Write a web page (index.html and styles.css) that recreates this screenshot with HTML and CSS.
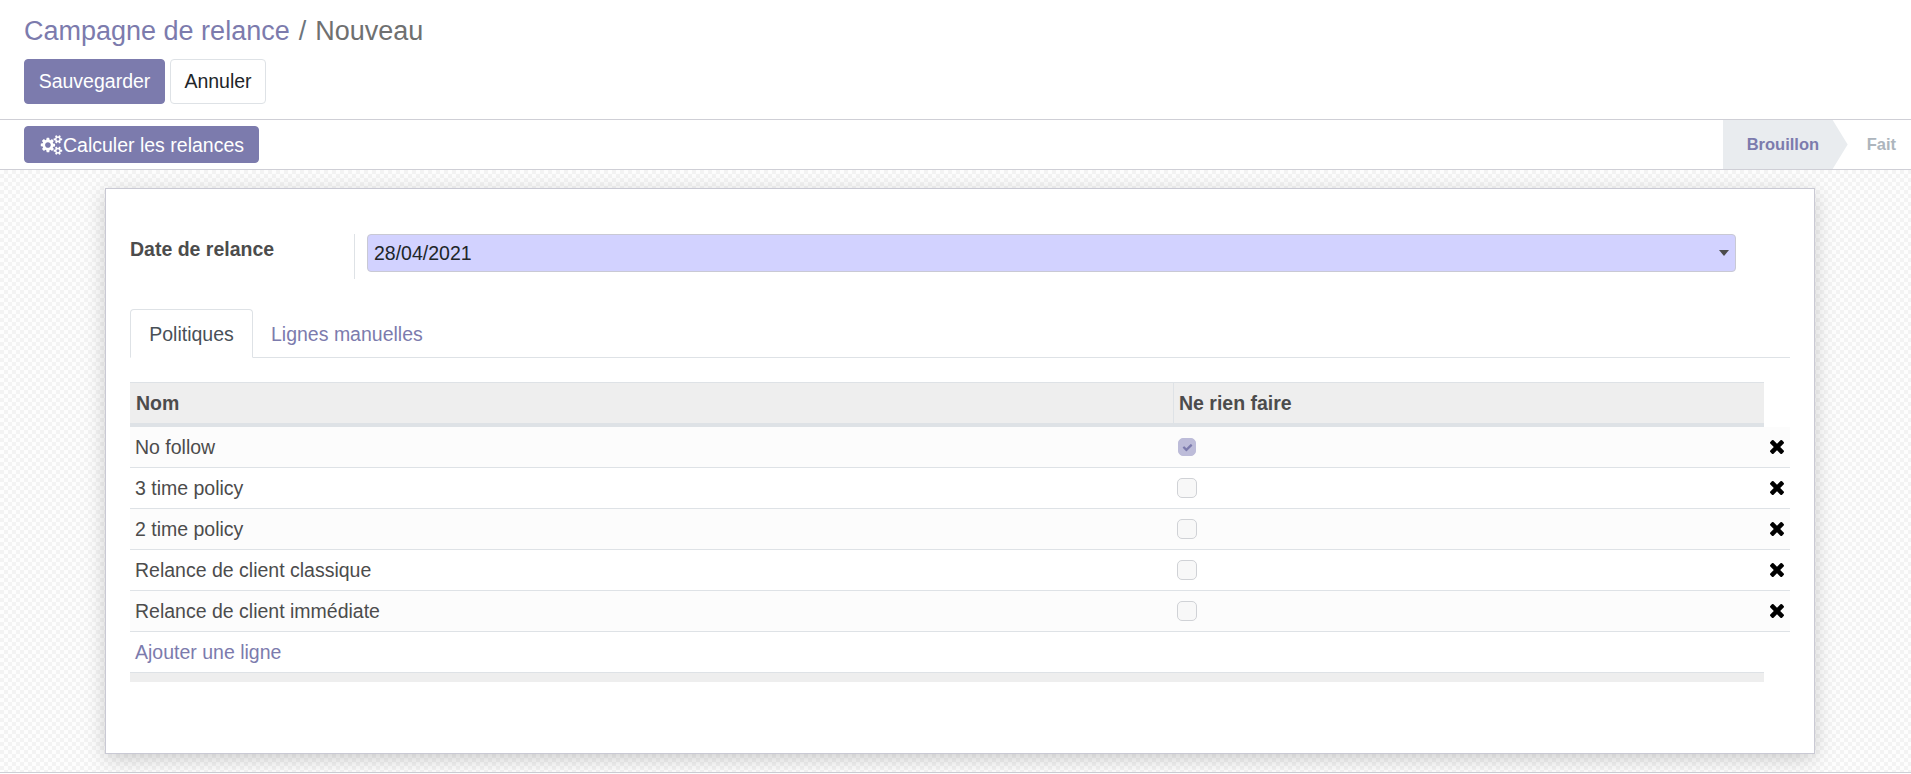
FILE: index.html
```html
<!DOCTYPE html>
<html lang="fr">
<head>
<meta charset="utf-8">
<title>Campagne de relance</title>
<link rel="stylesheet" href="styles.css">
</head>
<body>
<header class="control-panel">
  <h1 class="breadcrumb"><a class="crumb-link">Campagne de relance</a><span class="crumb-sep">/</span><span class="crumb-current">Nouveau</span></h1>
  <div class="actions">
    <button class="btn btn-primary btn-save">Sauvegarder</button>
    <button class="btn btn-secondary">Annuler</button>
  </div>
</header>
<div class="statusbar">
  <button class="btn btn-primary btn-compute">
    <svg class="icon-cogs" viewBox="0 0 2048 1792" aria-hidden="true"><path d="M960 896q0-106-75-181t-181-75-181 75-75 181 75 181 181 75 181-75 75-181zm768 512q0-52-38-90t-90-38-90 38-38 90q0 53 37.5 90.5t90.5 37.5 90.5-37.5 37.5-90.5zm0-1024q0-52-38-90t-90-38-90 38-38 90q0 53 37.5 90.5t90.5 37.5 90.5-37.5 37.5-90.5zm-384 421v185q0 10-7 19.5t-16 10.5l-155 24q-11 35-32 76 34 48 90 115 7 11 7 20 0 12-7 19-23 30-82.5 89.5t-78.5 59.5q-11 0-21-7l-115-90q-37 19-77 31-11 108-23 155-7 24-30 24h-186q-11 0-20-7.5t-10-17.5l-23-153q-34-10-75-31l-118 89q-7 7-20 7-11 0-21-8-144-133-144-160 0-9 7-19 10-14 41-53t47-61q-23-44-35-82l-152-24q-10-1-17-9.5t-7-19.5v-185q0-10 7-19.5t16-10.5l155-24q11-35 32-76-34-48-90-115-7-11-7-20 0-12 7-20 22-30 82-89t79-59q11 0 21 7l115 90q34-18 77-32 11-108 23-154 7-24 30-24h186q11 0 20 7.5t10 17.5l23 153q34 10 75 31l118-89q8-7 20-7 11 0 21 8 144 133 144 160 0 8-7 19-12 16-42 54t-45 60q23 48 34 82l152 23q10 2 17 10.5t7 19.5zm640 533v140q0 16-149 31-12 27-30 52 51 113 51 138 0 4-4 7-122 71-124 71-8 0-46-47t-52-68q-20 2-30 2t-30-2q-14 21-52 68t-46 47q-2 0-124-71-4-3-4-7 0-25 51-138-18-25-30-52-149-15-149-31v-140q0-16 149-31 13-29 30-52-51-113-51-138 0-4 4-7 4-2 35-20t59-34 30-16q8 0 46 46.5t52 67.5q20-2 30-2t30 2q51-71 92-112l6-2q4 0 124 70 4 3 4 7 0 25-51 138 17 23 30 52 149 15 149 31zm0-1024v140q0 16-149 31-12 27-30 52 51 113 51 138 0 4-4 7-122 71-124 71-8 0-46-47t-52-68q-20 2-30 2t-30-2q-14 21-52 68t-46 47q-2 0-124-71-4-3-4-7 0-25 51-138-18-25-30-52-149-15-149-31v-140q0-16 149-31 13-29 30-52-51-113-51-138 0-4 4-7 4-2 35-20t59-34 30-16q8 0 46 46.5t52 67.5q20-2 30-2t30 2q51-71 92-112l6-2q4 0 124 70 4 3 4 7 0 25-51 138 17 23 30 52 149 15 149 31z"/></svg>
    <span class="btn-label">Calculer les relances</span>
  </button>
  <div class="status-steps">
    <div class="step step-active">Brouillon</div>
    <div class="step">Fait</div>
  </div>
</div>
<main class="sheet-bg">
  <section class="sheet">
    <div class="field-row">
      <label class="field-label">Date de relance</label>
      <div class="field-cell">
        <div class="select-input"><span class="select-value">28/04/2021</span><i class="caret"></i></div>
      </div>
    </div>
    <nav class="tabs">
      <a class="tab tab-active">Politiques</a>
      <a class="tab">Lignes manuelles</a>
    </nav>
    <table class="grid">
      <colgroup><col class="col-name"><col class="col-flag"><col class="col-del"></colgroup>
      <thead>
        <tr><th class="th-name">Nom</th><th class="th-flag">Ne rien faire</th><th class="th-empty"></th></tr>
      </thead>
      <tbody>
        <tr class="odd"><td class="td-name">No follow</td><td class="td-flag"><span class="check check-on"><svg viewBox="0 0 1792 1792" aria-hidden="true"><path d="M1671 566q0 40-28 68l-724 724-136 136q-28 28-68 28t-68-28l-136-136-362-362q-28-28-28-68t28-68l136-136q28-28 68-28t68 28l294 295 656-657q28-28 68-28t68 28l136 136q28 28 28 68z"/></svg></span></td><td class="td-del"><svg class="icon-x" viewBox="110 -18 1188 1188" aria-hidden="true"><path d="M1298 214q0-40-28-68l-136-136q-28-28-68-28t-68 28l-294 294-294-294q-28-28-68-28t-68 28l-136 136q-28 28-28 68t28 68l294 294-294 294q-28 28-28 68t28 68l136 136q28 28 68 28t68-28l294-294 294 294q28 28 68 28t68-28l136-136q28-28 28-68t-28-68l-294-294 294-294q28-28 28-68z"/></svg></td></tr>
        <tr><td class="td-name">3 time policy</td><td class="td-flag"><span class="check"></span></td><td class="td-del"><svg class="icon-x" viewBox="110 -18 1188 1188" aria-hidden="true"><path d="M1298 214q0-40-28-68l-136-136q-28-28-68-28t-68 28l-294 294-294-294q-28-28-68-28t-68 28l-136 136q-28 28-28 68t28 68l294 294-294 294q-28 28-28 68t28 68l136 136q28 28 68 28t68-28l294-294 294 294q28 28 68 28t68-28l136-136q28-28 28-68t-28-68l-294-294 294-294q28-28 28-68z"/></svg></td></tr>
        <tr class="odd"><td class="td-name">2 time policy</td><td class="td-flag"><span class="check"></span></td><td class="td-del"><svg class="icon-x" viewBox="110 -18 1188 1188" aria-hidden="true"><path d="M1298 214q0-40-28-68l-136-136q-28-28-68-28t-68 28l-294 294-294-294q-28-28-68-28t-68 28l-136 136q-28 28-28 68t28 68l294 294-294 294q-28 28-28 68t28 68l136 136q28 28 68 28t68-28l294-294 294 294q28 28 68 28t68-28l136-136q28-28 28-68t-28-68l-294-294 294-294q28-28 28-68z"/></svg></td></tr>
        <tr><td class="td-name">Relance de client classique</td><td class="td-flag"><span class="check"></span></td><td class="td-del"><svg class="icon-x" viewBox="110 -18 1188 1188" aria-hidden="true"><path d="M1298 214q0-40-28-68l-136-136q-28-28-68-28t-68 28l-294 294-294-294q-28-28-68-28t-68 28l-136 136q-28 28-28 68t28 68l294 294-294 294q-28 28-28 68t28 68l136 136q28 28 68 28t68-28l294-294 294 294q28 28 68 28t68-28l136-136q28-28 28-68t-28-68l-294-294 294-294q28-28 28-68z"/></svg></td></tr>
        <tr class="odd"><td class="td-name">Relance de client immédiate</td><td class="td-flag"><span class="check"></span></td><td class="td-del"><svg class="icon-x" viewBox="110 -18 1188 1188" aria-hidden="true"><path d="M1298 214q0-40-28-68l-136-136q-28-28-68-28t-68 28l-294 294-294-294q-28-28-68-28t-68 28l-136 136q-28 28-28 68t28 68l294 294-294 294q-28 28-28 68t28 68l136 136q28 28 68 28t68-28l294-294 294 294q28 28 68 28t68-28l136-136q28-28 28-68t-28-68l-294-294 294-294q28-28 28-68z"/></svg></td></tr>
        <tr class="add-row"><td colspan="3"><a class="add-link">Ajouter une ligne</a></td></tr>
      </tbody>
      <tfoot>
        <tr><td class="foot-cell" colspan="2"></td><td class="foot-empty"></td></tr>
      </tfoot>
    </table>
  </section>
</main>
</body>
</html>
```
FILE: styles.css
```css
* { box-sizing: border-box; }
html, body { margin: 0; padding: 0; height: 100%; }
body {
  background: #fff;
  color: #4c4c4c;
  font-family: "Liberation Sans", Arial, sans-serif;
  font-size: 19.5px;
  line-height: 1.5;
  overflow: hidden;
}
a { color: #7c7bad; text-decoration: none; }

.control-panel {
  height: 120px;
  padding: 13px 24px 0;
  border-bottom: 1px solid #cfcfd6;
}
.breadcrumb {
  margin: 0;
  height: 37px;
  font-size: 27px;
  font-weight: 400;
  line-height: 37px;
  color: #6c757d;
}
.crumb-sep { margin: 0 9px; }
.crumb-current { color: #6f7070; }

.actions { display: flex; gap: 5px; margin-top: 9px; }
.btn {
  font: inherit;
  border-radius: 4px;
  cursor: pointer;
}
.btn-primary {
  background: #7c7bad;
  border: 1px solid #7c7bad;
  color: #fff;
}
.btn-secondary {
  background: #fff;
  border: 1px solid #dee2e6;
  color: #212529;
  width: 96px;
  height: 45px;
  padding: 0;
}
.btn-save { width: 141px; height: 45px; padding: 0; }

.statusbar {
  height: 50px;
  padding-left: 24px;
  border-bottom: 1px solid #cfcfd6;
  display: flex;
  justify-content: space-between;
  align-items: center;
}
.btn-compute {
  width: 235px;
  height: 37px;
  padding: 0 0 0 15px;
  display: flex;
  align-items: center;
  line-height: 1;
}
.btn-label { position: relative; top: 1px; }
.icon-cogs { width: 23px; height: 20px; fill: #fff; flex: none; }

.status-steps { display: flex; align-self: stretch; }
.step {
  display: flex;
  align-items: center;
  font-size: 16.5px;
  font-weight: 700;
  color: #adb5bd;
  padding: 0 15px 0 19px;
}
.step-active {
  width: 125px;
  padding: 0 0 0 24px;
  background: #e9ecef;
  color: #7c7bad;
  clip-path: polygon(0 0, 110px 0, 125px 50%, 110px 100%, 0 100%);
}

.sheet-bg {
  height: 603px;
  padding: 18px 0 0 105px;
  border-bottom: 1px solid #cfcfd6;
  background-color: #fdfdfd;
  background-image: conic-gradient(#f3f3f3 25%, #fdfdfd 0 50%, #f3f3f3 0 75%, #fdfdfd 0);
  background-size: 8px 8px;
}
.sheet {
  width: 1710px;
  height: 566px;
  padding: 45px 24px 0;
  background: #fff;
  border: 1px solid #c9c9d4;
  box-shadow: 0 5px 20px -1px rgba(0, 0, 0, 0.2);
}

.field-row { display: flex; }
.field-label {
  width: 224px;
  font-weight: 700;
  line-height: 30px;
  color: #4c4c4c;
}
.field-cell {
  width: 1382px;
  height: 45px;
  padding-left: 12px;
  border-left: 1px solid #dee2e6;
}
.select-input {
  height: 38px;
  padding: 0 6px;
  display: flex;
  align-items: center;
  justify-content: space-between;
  background: #d2d2ff;
  border: 1px solid #c9c9d4;
  border-radius: 4px;
  color: #212529;
}
.select-value { position: relative; top: 1px; }
.caret {
  width: 0;
  height: 0;
  border-left: 5px solid transparent;
  border-right: 5px solid transparent;
  border-top: 6px solid #4c4c4c;
}

.tabs {
  display: flex;
  margin-top: 30px;
  height: 49px;
  width: 1660px;
  border-bottom: 1px solid #dee2e6;
}
.tab {
  height: 49px;
  padding: 2px 19px 0 17px;
  display: flex;
  align-items: center;
  border: 1px solid transparent;
  border-radius: 4px 4px 0 0;
}
.tab-active {
  width: 123px;
  padding: 2px 0 0;
  justify-content: center;
  color: #495057;
  background: #fff;
  border-color: #dee2e6 #dee2e6 #fff;
}

.grid {
  margin-top: 24px;
  width: 1660px;
  border-collapse: separate;
  border-spacing: 0;
  table-layout: fixed;
}
.col-name { width: 1043px; }
.col-flag { width: 591px; }
.col-del { width: 26px; }

.grid th {
  height: 45px;
  padding: 2px 6px 0;
  text-align: left;
  font-weight: 700;
  background: #eeeeee;
  border-top: 1px solid #dee2e6;
  border-bottom: 4px solid #dee2e6;
  color: #4c4c4c;
}
.grid .th-flag { border-left: 1px solid #dee2e6; padding-left: 5px; }
.grid .th-empty { background: #fff; border: 0; }

.grid td {
  height: 41px;
  padding: 0 5px;
  border-bottom: 1px solid #dee2e6;
}
.grid .td-name { padding-top: 2px; }
.grid tbody .odd td { background: #fcfcfc; }
.grid .td-del { padding: 0 6px 0 0; text-align: right; }
.icon-x { display: block; margin-left: auto; width: 14px; height: 14px; fill: #000; }

.check {
  display: block;
  width: 20px;
  height: 20px;
  margin-left: -1px;
  background: #f8f8f8;
  border: 1px solid #d0d2d6;
  border-radius: 5px;
}
.check-on {
  width: 18px;
  height: 18px;
  margin-left: 0;
  background: #bdbcd9;
  border-color: #bdbcd9;
  display: flex;
  align-items: center;
  justify-content: center;
}
.check-on svg { width: 11px; height: 11px; fill: #7c7bad; }

.grid .add-row td { height: 40px; border-bottom: 0; }
.add-link { display: block; line-height: 40px; }

.grid tfoot td { height: 10px; padding: 0; border: 0; }
.grid tfoot .foot-cell { background: #eeeeee; border-top: 1px solid #dee2e6; }
```
